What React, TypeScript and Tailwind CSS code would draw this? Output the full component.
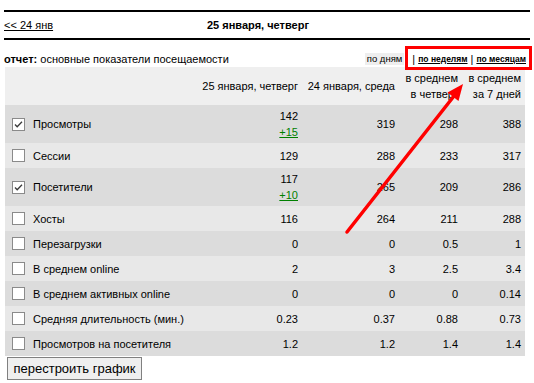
import React from "react";

type Row = { label: string; checked?: boolean; v: string[]; delta?: string };

const rows: Row[] = [
  { label: "Просмотры", checked: true, v: ["142", "319", "298", "388"], delta: "+15" },
  { label: "Сессии", v: ["129", "288", "233", "317"] },
  { label: "Посетители", checked: true, v: ["117", "265", "209", "286"], delta: "+10" },
  { label: "Хосты", v: ["116", "264", "211", "288"] },
  { label: "Перезагрузки", v: ["0", "0", "0.5", "1"] },
  { label: "В среднем online", v: ["2", "3", "2.5", "3.4"] },
  { label: "В среднем активных online", v: ["0", "0", "0", "0.14"] },
  { label: "Средняя длительность (мин.)", v: ["0.23", "0.37", "0.88", "0.73"] },
  { label: "Просмотров на посетителя", v: ["1.2", "1.2", "1.4", "1.4"] },
];

function Check({ checked }: { checked?: boolean }) {
  return (
    <svg width="13" height="13" viewBox="0 0 13 13" className="shrink-0">
      <rect x="0.5" y="0.5" width="12" height="12" fill="#ffffff" stroke="#8a8a8a" />
      {checked && (
        <polyline points="3,6.5 5.2,8.8 10,3.8" fill="none" stroke="#3a3a3a" strokeWidth="1.3" />
      )}
    </svg>
  );
}

export default function App() {
  return (
    <div className="relative w-[534px] h-[383px] overflow-hidden bg-white text-black text-[11px] font-['Liberation_Sans',Arial,sans-serif]">
      <div className="px-[4px] pt-[10px]">
        <div className="h-[2px] bg-black" />
        <div className="flex items-center h-[26px]">
          <a className="w-[203px] shrink-0 underline text-black leading-[14px]">&lt;&lt; 24 янв</a>
          <span className="font-bold leading-[14px]">25 января, четверг</span>
        </div>
        <div className="h-[2px] bg-black" />
        <div className="mt-[12px] h-[14px] flex items-center pr-[4px]">
          <span className="font-bold">отчет:</span>
          <span>&nbsp;основные показатели посещаемости</span>
          <span className="ml-auto bg-[#eeeeee] px-[2px] h-[12px] leading-[12px] text-[9.5px]">по дням</span>
          <span className="ml-[8px] mr-[3px]">|</span>
          <a className="underline font-bold text-[8.5px]">по неделям</a>
          <span className="mx-[3px]">|</span>
          <a className="underline font-bold text-[8.5px]">по месяцам</a>
        </div>
        <div className="ml-[1px] mt-[1px] w-[520px]">
          <div className="grid grid-cols-[183px_114px_97px_63px_63px] h-[38px] bg-[#efefef] leading-[16px]">
            <div />
            <div className="flex items-center justify-end pr-[4px]">25 января, четверг</div>
            <div className="flex items-center justify-end pr-[4px]">24 января, среда</div>
            <div className="flex flex-col justify-center items-end pr-[4px]">
              <span>в среднем</span>
              <span>в четверг</span>
            </div>
            <div className="flex flex-col justify-center items-end pr-[4px]">
              <span>в среднем</span>
              <span>за 7 дней</span>
            </div>
          </div>
          {rows.map((r, i) => (
            <div
              key={r.label}
              className={
                "grid grid-cols-[183px_114px_97px_63px_63px] leading-[16px] " +
                (r.delta ? "h-[38px] " : "h-[25px] ") +
                (i % 2 === 0 ? "bg-[#dcdcdc]" : "bg-[#e8e8e8]")
              }
            >
              <div className="flex items-center pl-[7px] gap-[8px]">
                <Check checked={r.checked} />
                <span>{r.label}</span>
              </div>
              <div className="flex flex-col justify-center items-end pr-[4px]">
                <span>{r.v[0]}</span>
                {r.delta && <a className="underline text-[#008000]">{r.delta}</a>}
              </div>
              <div className="flex items-center justify-end pr-[4px]">{r.v[1]}</div>
              <div className="flex items-center justify-end pr-[4px]">{r.v[2]}</div>
              <div className="flex items-center justify-end pr-[4px]">{r.v[3]}</div>
            </div>
          ))}
        </div>
        <button className="mt-[1px] ml-[3px] w-[135px] h-[23px] border border-[#808080] bg-[#efefef] text-[13px] leading-[21px] text-black">
          перестроить график
        </button>
      </div>

      <div className="absolute left-[405px] top-[46px] w-[127px] h-[24px] border-[3px] border-[#ff0000]" />
      <svg className="absolute left-0 top-0 pointer-events-none" width="534" height="383" viewBox="0 0 534 383">
        <line x1="347" y1="232" x2="454" y2="96" stroke="#ff0000" strokeWidth="3.5" strokeLinecap="round" />
        <polygon points="463,84 458.5,101 447.5,92.5" fill="#ff0000" />
      </svg>
    </div>
  );
}
